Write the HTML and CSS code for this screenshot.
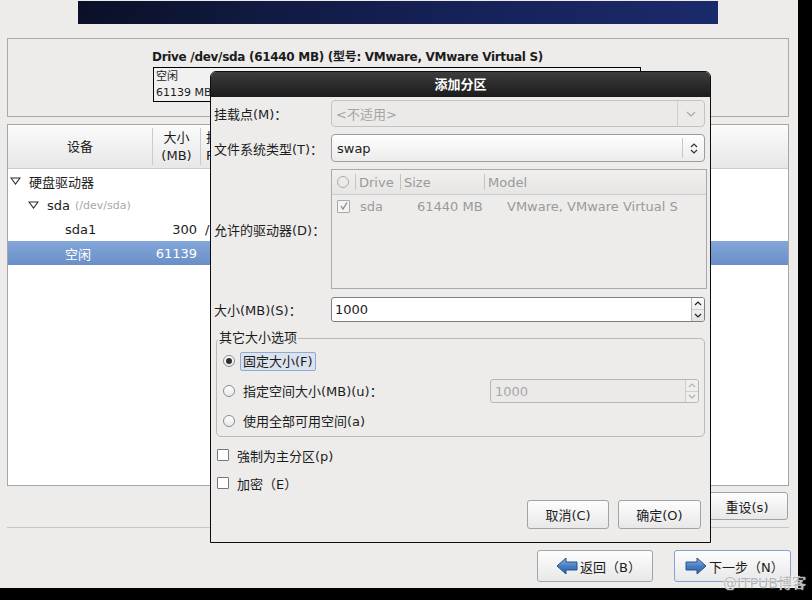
FILE: index.html
```html
<!DOCTYPE html>
<html lang="zh-CN">
<head>
<meta charset="utf-8">
<title>添加分区</title>
<link rel="stylesheet" href="styles.css">
</head>
<body>
<div class="screen">
  <div class="app">
    <div class="banner"></div>

    <div class="drive-panel">
      <div class="drive-col">
        <div class="drive-title">Drive /dev/sda (61440 MB) (型号: VMware, VMware Virtual S)</div>
        <div class="drive-bar">
          <div class="seg"><div>空闲</div><div>61139 MB</div></div>
        </div>
      </div>
    </div>

    <div class="tree">
      <div class="tree-head">
        <div class="th c-dev">设备</div>
        <div class="th c-size">大小<br>(MB)</div>
        <div class="th c-mnt">挂<br>F</div>
      </div>
      <div class="tree-row">
        <div class="tn lvl0"><svg class="exp" width="11" height="8" viewBox="0 0 11 8"><path d="M1 1 H10 L5.5 7 Z" fill="none" stroke="#2b2b2b" stroke-width="1.1"/></svg>硬盘驱动器</div>
        <div class="ts"></div><div class="tm"></div>
      </div>
      <div class="tree-row">
        <div class="tn lvl1"><svg class="exp" width="11" height="8" viewBox="0 0 11 8"><path d="M1 1 H10 L5.5 7 Z" fill="none" stroke="#2b2b2b" stroke-width="1.1"/></svg>sda <span class="dim">(/dev/sda)</span></div>
        <div class="ts"></div><div class="tm"></div>
      </div>
      <div class="tree-row">
        <div class="tn lvl2">sda1</div>
        <div class="ts">300</div><div class="tm">/</div>
      </div>
      <div class="tree-row sel">
        <div class="tn lvl2">空闲</div>
        <div class="ts">61139</div><div class="tm"></div>
      </div>
    </div>

    <div class="reset-row"><button class="btn reset">重设(s)</button></div>
    <div class="sep"></div>
    <div class="nav-row">
      <button class="btn nav back">
        <svg width="22" height="20" viewBox="0 0 22 20"><defs><linearGradient id="ga" x1="0" y1="0" x2="0" y2="1"><stop offset="0" stop-color="#8fb4e6"/><stop offset="0.5" stop-color="#4a7fc4"/><stop offset="1" stop-color="#2c5c9e"/></linearGradient></defs><path d="M1 10 L10 2 V6 H21 V14 H10 V18 Z" fill="url(#ga)" stroke="#24528f" stroke-width="1"/></svg>
        <span>返回（B）</span>
      </button>
      <button class="btn nav next">
        <svg width="22" height="20" viewBox="0 0 22 20"><defs><linearGradient id="gb" x1="0" y1="0" x2="0" y2="1"><stop offset="0" stop-color="#8fb4e6"/><stop offset="0.5" stop-color="#4a7fc4"/><stop offset="1" stop-color="#2c5c9e"/></linearGradient></defs><path d="M21 10 L12 2 V6 H1 V14 H12 V18 Z" fill="url(#gb)" stroke="#24528f" stroke-width="1"/></svg>
        <span>下一步（N）</span>
      </button>
    </div>
  </div>

  <div class="dialog">
    <div class="dlg-title">添加分区</div>
    <div class="dlg-body">
      <div class="field r1">
        <label>挂载点(M)：</label>
        <div class="combo disabled">
          <span class="ctext">&lt;不适用&gt;</span>
          <span class="cbtn wide"><svg width="10" height="6" viewBox="0 0 10 6"><path d="M1 1 L5 5 L9 1" fill="none" stroke="#a6a6a6" stroke-width="1.1"/></svg></span>
        </div>
      </div>
      <div class="field r2">
        <label>文件系统类型(T)：</label>
        <div class="combo">
          <span class="ctext">swap</span>
          <span class="cbtn"><svg width="8" height="13" viewBox="0 0 8 13"><path d="M1 5 L4 2 L7 5 M1 8 L4 11 L7 8" fill="none" stroke="#333" stroke-width="1.2"/></svg></span>
        </div>
      </div>
      <div class="field r3">
        <label>允许的驱动器(D)：</label>
        <div class="drives">
          <div class="dh">
            <div class="dc d0"><span class="circ"></span></div>
            <div class="dc d1">Drive</div>
            <div class="dc d2">Size</div>
            <div class="dc d3">Model</div>
          </div>
          <div class="dr">
            <div class="dd d0"><span class="dcheck"><svg width="10" height="10" viewBox="0 0 10 10"><path d="M2 5 L4 8 L8 1.5" fill="none" stroke="#8a8a8a" stroke-width="1.3"/></svg></span></div>
            <div class="dd d1">sda</div>
            <div class="dd d2">61440 MB</div>
            <div class="dd d3">VMware, VMware Virtual S</div>
          </div>
        </div>
      </div>
      <div class="field r4">
        <label>大小(MB)(S)：</label>
        <div class="spin">
          <span class="stext">1000</span>
          <span class="sbtns">
            <span><svg width="8" height="5" viewBox="0 0 8 5"><path d="M1 4 L4 1 L7 4" fill="none" stroke="#222" stroke-width="1.2"/></svg></span>
            <span><svg width="8" height="5" viewBox="0 0 8 5"><path d="M1 1 L4 4 L7 1" fill="none" stroke="#222" stroke-width="1.2"/></svg></span>
          </span>
        </div>
      </div>

      <fieldset class="frame">
        <legend>其它大小选项</legend>
        <div class="opt"><span class="radio on"></span><span class="olabel focus">固定大小(F)</span></div>
        <div class="opt"><span class="radio"></span><span class="olabel">指定空间大小(MB)(u)：</span>
          <div class="spin off">
            <span class="stext">1000</span>
            <span class="sbtns">
              <span><svg width="8" height="5" viewBox="0 0 8 5"><path d="M1 4 L4 1 L7 4" fill="none" stroke="#b0b0b0" stroke-width="1.1"/></svg></span>
              <span><svg width="8" height="5" viewBox="0 0 8 5"><path d="M1 1 L4 4 L7 1" fill="none" stroke="#b0b0b0" stroke-width="1.1"/></svg></span>
            </span>
          </div>
        </div>
        <div class="opt"><span class="radio"></span><span class="olabel">使用全部可用空间(a)</span></div>
      </fieldset>

      <div class="check-row"><span class="check"></span><span>強制为主分区(p)</span></div>
      <div class="check-row"><span class="check"></span><span>加密（E）</span></div>

      <div class="dlg-buttons">
        <button class="btn dbtn">取消(C)</button>
        <button class="btn dbtn ok">确定(O)</button>
      </div>
    </div>
  </div>

  <div class="watermark">@ITPUB博客</div>
</div>
</body>
</html>
```

FILE: styles.css
```css
* { box-sizing: border-box; }
html, body { margin: 0; padding: 0; }
body {
  background: #000;
  font-family: "DejaVu Sans", "Noto Sans CJK SC", sans-serif;
  font-size: 13px;
  color: #1c1c1c;
}
.screen {
  position: relative;
  width: 812px;
  height: 600px;
  overflow: hidden;
  background: #000;
}
.app {
  width: 798px;
  height: 588px;
  background: #edeceb;
  display: flex;
  flex-direction: column;
}
.banner {
  margin: 1px 0 0 78px;
  width: 640px;
  height: 23px;
  flex: none;
  background: linear-gradient(100deg, #0a1027 0%, #111a42 30%, #162158 60%, #1b2a6b 100%);
}

/* drive panel */
.drive-panel {
  margin: 14px 9px 0 7px;
  height: 79px;
  flex: none;
  border: 1px solid #a9a9a9;
  display: flex;
  justify-content: center;
}
.drive-col { width: 488px; padding-top: 10px; margin-left: -2px; }
.drive-title {
  font-weight: bold;
  font-size: 12px;
  letter-spacing: -0.3px;
  line-height: 16px;
  white-space: nowrap;
  margin-left: -1px;
}
.drive-bar {
  margin-top: 2px;
  height: 35px;
  border: 1px solid #000;
  background: #f1f1f1;
  display: flex;
}
.seg {
  padding: 1px 2px;
  font-size: 11px;
  line-height: 16px;
  white-space: nowrap;
}

/* tree */
.tree {
  margin: 7px 9px 0 7px;
  height: 362px;
  flex: none;
  border: 1px solid #a6a6a6;
  background: #fff;
}
.tree-head {
  height: 44px;
  display: grid;
  grid-template-columns: 144px 48px 1fr;
  background: linear-gradient(#fbfbfb, #e7e7e7);
  border-bottom: 1px solid #cdcdcd;
}
.th {
  display: flex;
  align-items: center;
  justify-content: center;
  text-align: center;
  line-height: 18px;
  margin: 3px 0;
}
.th + .th { border-left: 1px solid #cbcbcb; }
.c-mnt { justify-content: flex-start; text-align: left; padding-left: 5px; }
.tree-row {
  height: 24px;
  display: grid;
  grid-template-columns: 144px 48px 1fr;
  align-items: center;
  white-space: nowrap;
}
.tn { display: flex; align-items: center; }
.exp { margin-right: 8px; flex: none; }
.lvl0 { padding-left: 2px; }
.lvl1 { padding-left: 20px; }
.lvl2 { padding-left: 57px; }
.dim { color: #a8a8a8; font-size: 11px; margin-left: 5px; }
.ts { text-align: right; padding-right: 3px; }
.tm { padding-left: 5px; }
.tree-row.sel {
  background: linear-gradient(#83a7d9, #6a8fc7);
  color: #fff;
}

/* buttons */
.btn {
  font: inherit;
  color: #1c1c1c;
  border: 1px solid #a3a3a3;
  border-radius: 3px;
  background: linear-gradient(#fdfdfd, #e8e8e8);
  display: flex;
  align-items: center;
  justify-content: center;
  padding: 0;
  white-space: nowrap;
}
.reset-row {
  display: flex;
  justify-content: flex-end;
  margin: 6px 10px 0 0;
}
.reset { width: 82px; height: 28px; }
.sep {
  margin: 7px 9px 0 7px;
  height: 1px;
  flex: none;
  background: #c6c6c6;
}
.nav-row {
  display: flex;
  justify-content: flex-end;
  gap: 21px;
  margin: 22px 7px 0 0;
}
.nav { height: 32px; gap: 2px; justify-content: flex-start; }
.back { width: 116px; padding-left: 18px; }
.next { width: 117px; padding-left: 10px; border-color: #86a3cf; }

/* dialog */
.dialog {
  position: absolute;
  left: 210px;
  top: 71px;
  width: 501px;
  height: 472px;
  background: #edeceb;
  border: 1px solid #0d0d0d;
  border-radius: 6px 6px 0 0;
  overflow: hidden;
  display: flex;
  flex-direction: column;
}
.dlg-title {
  height: 25px;
  flex: none;
  background: linear-gradient(#3d3d3d, #1b1b1b);
  color: #fff;
  font-weight: bold;
  text-align: center;
  line-height: 25px;
}
.dlg-body {
  padding: 0 5px 0 3px;
  display: flex;
  flex-direction: column;
}
.field { display: flex; align-items: center; }
.field label { width: 117px; flex: none; white-space: nowrap; }
.r1 { margin-top: 3px; height: 27px; }
.r2 { margin-top: 7px; height: 28px; }
.r3 { margin-top: 7px; height: 120px; }
.r4 { margin-top: 8px; height: 25px; }

.combo {
  flex: 1;
  height: 100%;
  display: flex;
  align-items: stretch;
  border: 1px solid #9c9c9c;
  border-radius: 4px;
  background: linear-gradient(#fefefe, #ececec);
}
.ctext { flex: 1; display: flex; align-items: center; padding-left: 5px; }
.cbtn {
  width: 22px;
  margin: 3px 0;
  border-left: 1px solid #c6c6c6;
  display: flex;
  align-items: center;
  justify-content: center;
}
.cbtn.wide { width: 27px; margin: 0; border-left-color: #cfcfcf; }
.combo.disabled {
  border-color: #c3c3c3;
  background: #ebeae9;
  color: #a4a4a4;
}
.combo.disabled .ctext { padding-left: 4px; }

.drives {
  flex: 1;
  height: 100%;
  margin-right: -2px;
  border: 1px solid #aaa;
  background: #edeceb;
  color: #9a9a9a;
  white-space: nowrap;
}
.dh {
  height: 25px;
  display: flex;
  border-bottom: 1px solid #cdcdcd;
  background: linear-gradient(#f0efee, #e7e6e5);
}
.dr { height: 22px; display: flex; }
.dc, .dd { display: flex; align-items: center; }
.dc { margin: 4px 0; }
.dc + .dc { border-left: 1px solid #c4c4c4; padding-left: 3px; }
.d0 { width: 23px; padding-left: 5px; }
.d1 { width: 45px; }
.d2 { width: 84px; }
.d3 { flex: 1; }
.dd.d1 { padding-left: 5px; }
.dd.d2 { padding-left: 17px; }
.dd.d3 { padding-left: 23px; }
.circ {
  width: 12px;
  height: 12px;
  border: 1px solid #ababab;
  border-radius: 50%;
}
.dcheck {
  width: 13px;
  height: 13px;
  border: 1px solid #a9a9a9;
  border-radius: 1px;
  background: #f3f3f3;
  display: flex;
  align-items: center;
  justify-content: center;
}

.spin {
  flex: 1;
  height: 100%;
  display: flex;
  border: 1px solid #7f7f7f;
  border-radius: 3px;
  background: #fff;
  overflow: hidden;
}
.stext { flex: 1; display: flex; align-items: center; padding-left: 3px; }
.sbtns {
  width: 13px;
  border-left: 1px solid #b5b5b5;
  background: linear-gradient(#fafafa, #e4e4e4);
  display: flex;
  flex-direction: column;
}
.sbtns span {
  flex: 1;
  display: flex;
  align-items: center;
  justify-content: center;
}
.sbtns span + span { border-top: 1px solid #cfcfcf; }

.frame {
  margin: 8px 0 0 2px;
  padding: 0 5px 0 6px;
  border: 1px solid #b9b9b9;
  border-radius: 5px;
}
.frame legend {
  padding: 0 1px;
  margin-left: -5px;
  line-height: 16px;
}
.opt { height: 30px; display: flex; align-items: center; white-space: nowrap; }
.radio {
  width: 12px;
  height: 12px;
  flex: none;
  border: 1px solid #8c8c8c;
  border-radius: 50%;
  background: linear-gradient(#fff, #e8e8e8);
  display: flex;
  align-items: center;
  justify-content: center;
  margin-right: 5px;
}
.radio.on::after {
  content: "";
  width: 6px;
  height: 6px;
  border-radius: 50%;
  background: #2e2e2e;
}
.olabel {
  padding: 1px 2px;
  border: 1px solid transparent;
  border-radius: 2px;
  line-height: 15px;
}
.olabel.focus { background: #dbe3ee; border-color: #93aacd; }
.spin.off {
  flex: none;
  margin-left: auto;
  width: 209px;
  height: 24px;
  border-color: #b7b7b7;
  background: #ebeae9;
  color: #a8a8a8;
}
.spin.off .stext { padding-left: 4px; }
.spin.off .sbtns { background: #eeeeed; border-left-color: #cfcfcf; }

.check-row {
  height: 28px;
  display: flex;
  align-items: center;
  gap: 8px;
  padding-left: 3px;
}
.frame + .check-row { margin-top: 4px; }
.check {
  width: 12px;
  height: 12px;
  border: 1px solid #777;
  border-radius: 1px;
  background: #fff;
}
.dlg-buttons {
  display: flex;
  justify-content: flex-end;
  gap: 9px;
  margin: 3px 4px 0 0;
}
.dbtn { width: 82px; height: 29px; }
.dbtn.ok { width: 83px; }

.watermark {
  position: absolute;
  left: 723px;
  top: 575px;
  line-height: 16px;
  font-size: 14px;
  color: #b4b4b4;
  text-shadow: 0 0 1px #ffffff, 0 0 1px #ffffff;
  white-space: nowrap;
}
```
